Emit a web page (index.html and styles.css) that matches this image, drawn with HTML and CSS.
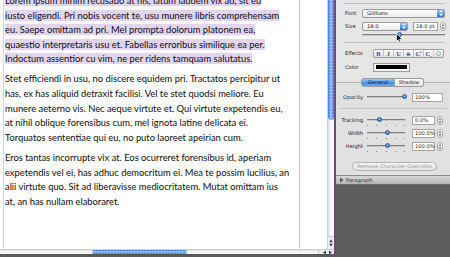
FILE: index.html
```html
<!DOCTYPE html>
<html>
<head>
<meta charset="utf-8">
<link rel="stylesheet" href="styles.css">
</head>
<body>
<div class="screen">
  <div class="docwin">
    <div class="docmain">
      <div class="page">
        <div class="text">
          <p class="para">
            <span class="hl">Lorem ipsum minim recusabo at his, latum laudem vix ad, sit eu</span><br>
            <span class="hl">iusto eligendi. Pri nobis vocent te, usu munere libris comprehensam</span><br>
            <span class="hl">eu. Saepe omittam ad pri. Mel prompta dolorum platonem ea,</span><br>
            <span class="hl">quaestio interpretaris usu et. Fabellas erroribus similique ea per.</span><br>
            <span class="hl">Indoctum assentior cu vim, ne per ridens tamquam salutatus.</span>
          </p>
          <p class="para">
            <span>Stet efficiendi in usu, no discere equidem pri. Tractatos percipitur ut</span><br>
            <span>has, ex has aliquid detraxit facilisi. Vel te stet quodsi meliore. Eu</span><br>
            <span>munere aeterno vis. Nec aeque virtute et. Qui virtute expetendis eu,</span><br>
            <span>at nihil oblique forensibus cum, mel ignota latine delicata ei.</span><br>
            <span>Torquatos sententiae qui eu, no puto laoreet apeirian cum.</span>
          </p>
          <p class="para">
            <span>Eros tantas incorrupte vix at. Eos ocurreret forensibus id, aperiam</span><br>
            <span>expetendis vel ei, has adhuc democritum ei. Mea te possim lucilius, an</span><br>
            <span>alii virtute quo. Sit ad liberavisse mediocritatem. Mutat omittam ius</span><br>
            <span>at, an has nullam elaboraret.</span>
          </p>
        </div>
      </div>
      <div class="gutter"></div>
      <div class="vscroll">
        <div class="vthumb"></div>
        <div class="vtrack"></div>
        <div class="varrows">
          <svg width="7" height="12" viewBox="0 0 7 12"><path d="M3.5 2 L5.5 5 L1.5 5 Z" fill="#333"/><path d="M3.5 10 L5.5 7 L1.5 7 Z" fill="#333"/></svg>
        </div>
      </div>
    </div>
    <div class="hscroll">
      <div class="htrack htrack-l"></div>
      <div class="hthumb"></div>
      <div class="htrack htrack-r"></div>
      <div class="harrows">
        <svg width="16" height="5" viewBox="0 0 16 5"><path d="M4 2.5 L7 0.8 L7 4.2 Z" fill="#333"/><path d="M13 2.5 L10 0.8 L10 4.2 Z" fill="#333"/></svg>
      </div>
    </div>
    <div class="bottomstrip"></div>
  </div>

  <div class="panel">
    <div class="topsep"></div>
    <div class="row row-font">
      <span class="lbl">Font</span>
      <div class="popup">
        <span class="popup-text">GillSans</span>
        <span class="bluearrows"><svg width="6" height="8" viewBox="0 0 6 8"><path d="M3 1 L5 3.3 L1 3.3 Z" fill="#fff"/><path d="M3 7 L5 4.7 L1 4.7 Z" fill="#fff"/></svg></span>
      </div>
    </div>
    <div class="row row-size">
      <span class="lbl">Size</span>
      <div class="combo">
        <span class="popup-text">18.0</span>
        <span class="bluearrows"><svg width="6" height="8" viewBox="0 0 6 8"><path d="M3 1 L5 3.3 L1 3.3 Z" fill="#fff"/><path d="M3 7 L5 4.7 L1 4.7 Z" fill="#fff"/></svg></span>
      </div>
      <div class="field field-pt">18.0 pt</div>
      <div class="stepper"><svg width="5" height="9" viewBox="0 0 5 9"><path d="M2.5 1.5 L4 3.5 L1 3.5 Z" fill="#444"/><path d="M2.5 7.5 L4 5.5 L1 5.5 Z" fill="#444"/></svg></div>
    </div>
    <div class="row row-sizeslider">
      <div class="slider slider-size"><span class="knob knob-size"></span></div>
      <svg class="cursor" width="7" height="11" viewBox="0 0 7 11"><path d="M0.5 0.5 L0.5 8.5 L2.4 6.8 L3.8 10 L5 9.4 L3.7 6.3 L6.2 6.2 Z" fill="#000" stroke="#fff" stroke-width="0.7"/></svg>
    </div>
    <div class="sep sep-mid"></div>
    <div class="row row-effects">
      <span class="lbl">Effects</span>
      <div class="segs">
        <span class="seg seg-b">B</span>
        <span class="seg seg-i">I</span>
        <span class="seg seg-u">U</span>
        <span class="seg seg-s">S</span>
        <span class="seg">C<sup>s</sup></span>
        <span class="seg">C<sub>s</sub></span>
        <span class="seg seg-o"><span class="ring"></span></span>
      </div>
    </div>
    <div class="row row-color">
      <span class="lbl">Color</span>
      <div class="well"><span class="swatch"></span></div>
    </div>
    <div class="tabs">
      <span class="tab tab-on">General</span>
      <span class="tab">Shadow</span>
    </div>
    <div class="box">
      <div class="row row-opacity">
        <span class="lbl2">Opacity</span>
        <div class="slider"><span class="knob knob-opacity"></span></div>
        <div class="field field-wide">100%</div>
      </div>
      <div class="sep sep-box"></div>
      <div class="row row-adj">
        <span class="lbl2">Tracking</span>
        <div class="slider"><span class="knob knob-track"></span></div>
        <div class="field">0.0%</div>
        <div class="stepper"><svg width="5" height="9" viewBox="0 0 5 9"><path d="M2.5 1.5 L4 3.5 L1 3.5 Z" fill="#444"/><path d="M2.5 7.5 L4 5.5 L1 5.5 Z" fill="#444"/></svg></div>
      </div>
      <div class="ticks"><i></i><i></i><i></i><i></i><i></i></div>
      <div class="row row-adj">
        <span class="lbl2">Width</span>
        <div class="slider"><span class="knob knob-mid"></span></div>
        <div class="field">100.0%</div>
        <div class="stepper"><svg width="5" height="9" viewBox="0 0 5 9"><path d="M2.5 1.5 L4 3.5 L1 3.5 Z" fill="#444"/><path d="M2.5 7.5 L4 5.5 L1 5.5 Z" fill="#444"/></svg></div>
      </div>
      <div class="ticks"><i></i><i></i><i></i><i></i><i></i></div>
      <div class="row row-adj">
        <span class="lbl2">Height</span>
        <div class="slider"><span class="knob knob-mid"></span></div>
        <div class="field">100.0%</div>
        <div class="stepper"><svg width="5" height="9" viewBox="0 0 5 9"><path d="M2.5 1.5 L4 3.5 L1 3.5 Z" fill="#444"/><path d="M2.5 7.5 L4 5.5 L1 5.5 Z" fill="#444"/></svg></div>
      </div>
      <div class="ticks"><i></i><i></i><i></i><i></i><i></i></div>
      <div class="btnrow"><span class="btn">Remove Character Overrides</span></div>
    </div>
    <div class="sechead">
      <svg width="5" height="6" viewBox="0 0 5 6"><path d="M1 0.5 L4.5 3 L1 5.5 Z" fill="#555"/></svg>
      <span>Paragraph</span>
    </div>
    <div class="dark"></div>
  </div>
</div>
</body>
</html>
```

FILE: styles.css
```css
* { box-sizing: border-box; }
html, body { margin: 0; padding: 0; }
body { width: 450px; height: 257px; overflow: hidden; background: #fff; }

.screen { display: flex; width: 450px; height: 257px; }

/* document window */
.docwin { width: 334px; display: flex; flex-direction: column; }
.docmain { display: flex; height: 249px; }
.page {
  width: 297px;
  background: #fff;
  border-left: 1px solid #d9cfe8;
  border-right: 1px solid #c9c9c9;
  margin-left: 3px;
  overflow: hidden;
}
.text {
  margin-top: -6px;
  padding-left: 1px;
  font-family: "Lato", "Liberation Sans", sans-serif;
  font-size: 9.35px;
  line-height: 14.6px;
  color: #0e0e0e;
  white-space: nowrap;
}
.para { margin: 0 0 5.5px 0; }
.hl { background: #e3d4f0; }

.gutter { width: 27px; background: #fff; }
.vscroll {
  width: 7px;
  display: flex; flex-direction: column;
  background: #f2f2f2;
  border-left: 1px solid #d0d0d0;
}
.vthumb {
  height: 120px;
  border-radius: 0 0 3px 3px;
  background:
    repeating-linear-gradient(to bottom, rgba(255,255,255,0.18) 0 1px, rgba(255,255,255,0) 1px 3px),
    linear-gradient(to right, #2f6fd0, #8cc0f4 45%, #5b9be6 80%, #2f6fd0);
}
.vtrack { flex: 1; background: linear-gradient(to right, #dcdcdc, #fafafa 40%, #f4f4f4); }
.varrows { height: 13px; background: #ececec; border-top: 1px solid #c8c8c8; display: flex; justify-content: center; }
.varrows svg { display: block; }

.hscroll { height: 5px; display: flex; background: #eee; border-top: 1px solid #cfcfcf; }
.htrack { background: linear-gradient(#d9d9d9, #fafafa 50%, #f2f2f2); }
.htrack-l { width: 92px; }
.hthumb {
  width: 95px;
  border-radius: 3px;
  background:
    repeating-linear-gradient(to right, rgba(255,255,255,0.18) 0 1px, rgba(255,255,255,0) 1px 3px),
    linear-gradient(to bottom, #2f6fd0, #8cc0f4 45%, #5b9be6 80%, #2f6fd0);
}
.htrack-r { flex: 1; }
.harrows { width: 16px; background: #ececec; border-left: 1px solid #c8c8c8; }
.harrows svg { display: block; }
.bottomstrip { height: 3px; background: #5a5a5a; }

/* inspector panel */
.panel {
  width: 116px;
  border-left: 2px solid #6e4a7c;
  background: #e6e6e6;
  display: flex; flex-direction: column;
  font-family: "DejaVu Sans", "Liberation Sans", sans-serif;
  font-size: 5.2px;
  color: #1c1c1c;
  position: relative;
}
.topsep { height: 4px; border-bottom: 1px solid #c2c2c2; margin: 0 5px 0 7px; }
.row { display: flex; align-items: center; }
.lbl { width: 26px; padding-left: 9px; white-space: nowrap; }
.row-font { margin-top: 4px; height: 10px; }
.row-size { margin-top: 3px; height: 10px; }
.popup, .combo {
  height: 9px;
  border: 1px solid #9b9b9b;
  border-radius: 2px;
  background: linear-gradient(#ffffff, #e9e9e9);
  display: flex; align-items: center;
  overflow: hidden;
}
.popup { width: 83px; }
.combo { width: 46px; }
.popup-text { flex: 1; padding-left: 4px; line-height: 7px; }
.bluearrows {
  width: 7px; height: 100%;
  background: linear-gradient(#8ec0f2, #2e72d2);
  display: flex; align-items: center; justify-content: center;
}
.bluearrows svg { display: block; }
.field {
  width: 23px; height: 9px;
  border: 1px solid #a4a4a4;
  background: #fff;
  line-height: 7px;
  padding-left: 2px;
  white-space: nowrap;
}
.field-pt { margin-left: 5px; width: 25px; }
.stepper {
  width: 6px; height: 9px; margin-left: 2px;
  border: 1px solid #a8a8a8; border-radius: 3px;
  background: linear-gradient(#fff, #e6e6e6);
  display: flex; align-items: center; justify-content: center;
}
.stepper svg { display: block; }

.row-sizeslider { height: 7px; padding-left: 26px; position: relative; }
.slider {
  height: 2px; background: #7d7d7d; border-bottom: 1px solid #c8c8c8;
  position: relative;
}
.slider-size { width: 83px; }
.knob {
  position: absolute; top: -2px;
  width: 5px; height: 5px; border-radius: 50%;
  background: radial-gradient(circle at 50% 35%, #a6d2fa, #2d6fd0 75%);
  border: 0.5px solid #2a57a0;
}
.knob-size { left: 35px; }
.cursor { position: absolute; left: 60px; top: 2px; }

.sep { border-top: 1px solid #c2c2c2; }
.sep-mid { margin: 4px 5px 0 7px; }
.row-effects { margin-top: 5px; height: 10px; }
.row-effects .lbl, .row-color .lbl { width: 37px; }
.segs {
  display: flex; width: 71px; height: 9px;
  border: 1px solid #9c9c9c; border-radius: 2px;
  background: linear-gradient(#ffffff, #e3e3e3);
  overflow: hidden;
}
.seg {
  flex: 1;
  border-left: 1px solid #c2c2c2;
  color: #2d4f9e;
  font-family: "Liberation Serif", serif;
  font-weight: bold;
  font-size: 6.5px;
  line-height: 7px;
  text-align: center;
  white-space: nowrap;
}
.seg:first-child { border-left: none; }
.seg-i { font-style: italic; }
.seg-u { text-decoration: underline; }
.seg-s { text-decoration: line-through; }
.seg sup, .seg sub { font-size: 3.5px; line-height: 0; }
.seg-o { display: flex; align-items: center; justify-content: center; }
.ring { width: 5px; height: 5px; border-radius: 50%; border: 1px solid #8aa6d6; }

.row-color { margin-top: 4px; height: 10px; }
.well {
  width: 37px; height: 9px;
  border: 1px solid #9a9a9a;
  background: #f4f4f4;
  padding: 1.5px 2px;
}
.swatch { display: block; width: 100%; height: 100%; background: #000; }

.tabs { margin-top: 5px; height: 10px; display: flex; padding-left: 25px; position: relative; z-index: 1; }
.tab {
  height: 9px; margin-top: 1px;
  border: 1px solid #9a9a9a;
  background: linear-gradient(#ffffff, #e4e4e4);
  line-height: 7px;
  text-align: center;
}
.tabs .tab:first-child { width: 34px; border-radius: 3px 0 0 3px; }
.tabs .tab:last-child { width: 29px; border-left: none; border-radius: 0 3px 3px 0; }
.tab-on { background: linear-gradient(#9fcaf5, #4c8fe0 55%, #6aa9ec); color: #0d1f3a; }

.box {
  margin-top: -5px;
  border-top: 1px solid #b5b5b5;
  background: #e1e1e1;
  padding: 9px 0 4px 0;
}
.row-opacity { height: 10px; }
.lbl2 { width: 27px; text-align: right; white-space: nowrap; margin-right: 4px; }
.box .slider { width: 38px; margin-right: 7px; }
.field-wide { width: 31px; }
.knob-opacity { left: 35px; }
.knob-track { left: 10px; }
.knob-mid { left: 18px; }
.sep-box { margin: 6px 3px 0 3px; }
.row-adj { height: 10px; }
.sep-box + .row-adj { margin-top: 6px; }
.ticks { height: 3px; display: flex; justify-content: space-between; width: 38px; margin-left: 31px; padding-top: 0; }
.ticks i { display: block; width: 1px; height: 1px; background: #888; }
.btnrow { margin-top: 8px; padding-left: 16px; }
.btn {
  display: block; width: 85px; height: 9px;
  border: 1px solid #b2b2b2; border-radius: 5px;
  background: linear-gradient(#f6f6f6, #e2e2e2);
  color: #9c9c9c;
  text-align: center; line-height: 7px;
  white-space: nowrap;
}
.sechead {
  height: 10px;
  border-top: 1px solid #8a8a8a;
  border-bottom: 1px solid #6a6a6a;
  background: linear-gradient(#d8d8d8, #b6b6b6);
  display: flex; align-items: center; gap: 2px;
  padding-left: 3px;
  color: #333;
}
.sechead svg { display: block; }
.dark { flex: 1; background: #5e5e5e; }
```
